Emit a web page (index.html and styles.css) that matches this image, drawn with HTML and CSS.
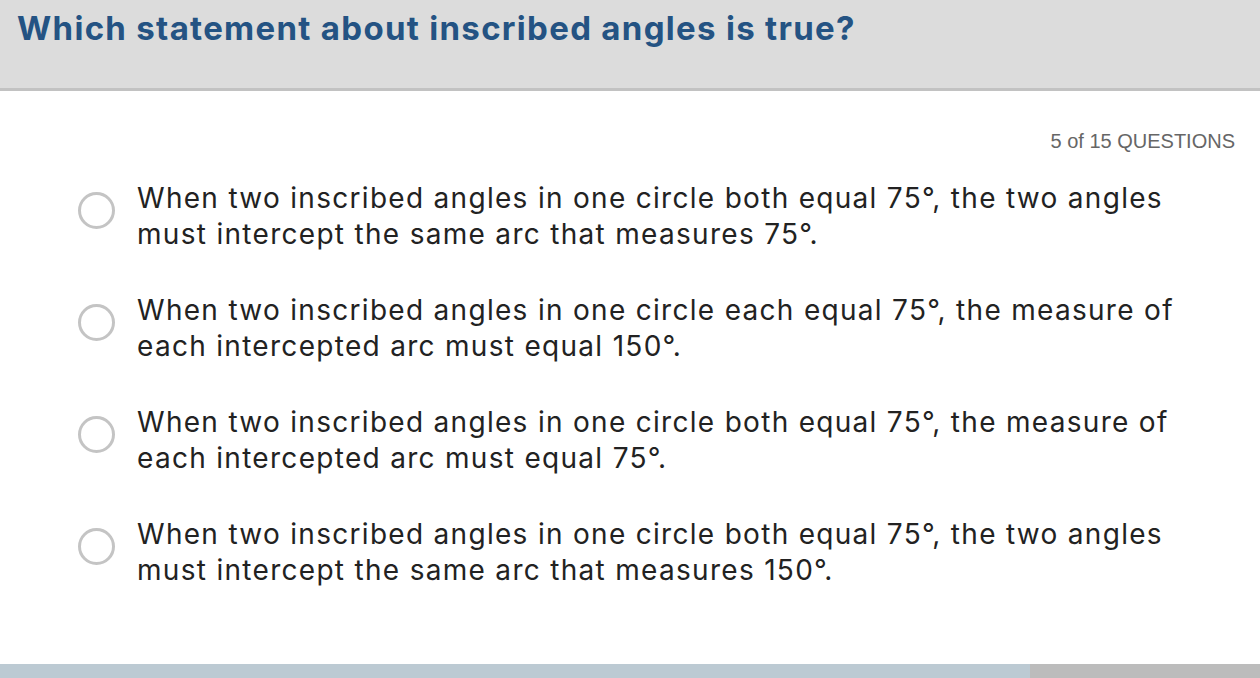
FILE: index.html
```html
<!DOCTYPE html>
<html>
<head>
<meta charset="utf-8">
<link rel="stylesheet" href="styles.css">
</head>
<body>
<div class="page">
  <header class="head">
    <h1 class="title">Which statement about inscribed angles is true?</h1>
  </header>
  <main class="body">
    <div class="counter">5 of 15 QUESTIONS</div>
    <ul class="options">
      <li class="option"><span class="radio"></span><span class="text">When two inscribed angles in one circle both equal 75°, the two angles must intercept the same arc that measures 75°.</span></li>
      <li class="option"><span class="radio"></span><span class="text">When two inscribed angles in one circle each equal 75°, the measure of each intercepted arc must equal 150°.</span></li>
      <li class="option"><span class="radio"></span><span class="text">When two inscribed angles in one circle both equal 75°, the measure of each intercepted arc must equal 75°.</span></li>
      <li class="option"><span class="radio"></span><span class="text">When two inscribed angles in one circle both equal 75°, the two angles must intercept the same arc that measures 150°.</span></li>
    </ul>
  </main>
  <footer class="progress">
    <div class="done"></div>
    <div class="rest"></div>
  </footer>
</div>
</body>
</html>
```
FILE: styles.css
```css
html, body { margin: 0; padding: 0; }
body { background: #fff; width: 1260px; height: 678px; overflow: hidden; }
.page { display: flex; flex-direction: column; height: 678px; }
.head {
  background: #dcdcdc;
  height: 88px;
  border-bottom: 3px solid #c2c2c2;
  box-sizing: content-box;
  padding: 0 17px;
}
.title {
  margin: 0;
  padding-top: 8px;
  font-family: Inter, sans-serif;
  font-weight: 700;
  font-size: 33px;
  line-height: 40px;
  letter-spacing: 1.3px;
  color: #245383;
}
.body { flex: 1; padding: 0 25px 0 78px; }
.counter {
  text-align: right;
  font-family: "Liberation Sans", Arial, sans-serif;
  font-size: 20px;
  color: #666;
  margin-top: 40px;
  line-height: 20px;
}
.options { list-style: none; margin: 29px 0 0; padding: 0; display: flex; flex-direction: column; gap: 40px; }
.option { display: flex; align-items: flex-start; gap: 22px; }
.radio {
  flex: none;
  width: 31px; height: 31px;
  margin-top: 12px;
  border: 3px solid #c4c4c4;
  border-radius: 50%;
}
.text {
  font-family: Inter, sans-serif;
  font-size: 28px;
  line-height: 36px;
  letter-spacing: 1.3px;
  color: #222;
  max-width: 1060px;
}
.progress { display: flex; height: 14px; }
.done { width: 1030px; background: #bccad3; }
.rest { flex: 1; background: #bcbcbc; }
```
